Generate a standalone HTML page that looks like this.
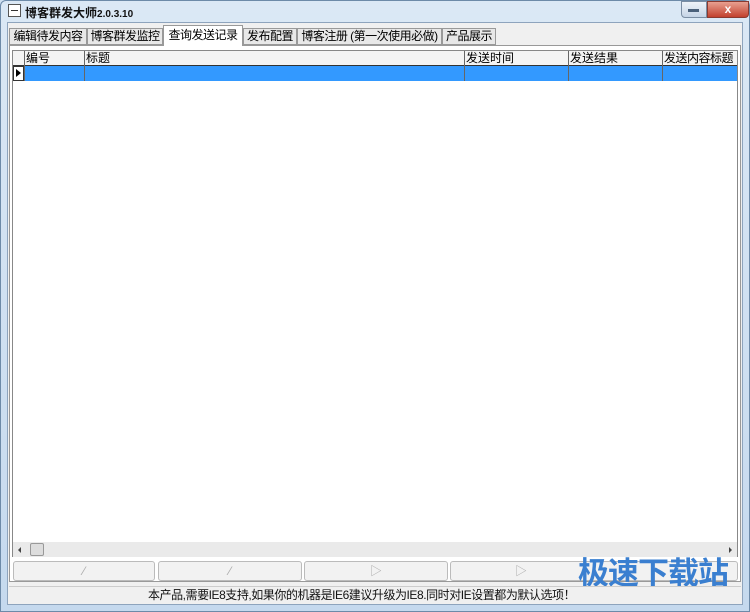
<html><head><style>
*{margin:0;padding:0;box-sizing:border-box}
body{width:750px;height:612px;position:relative;overflow:hidden;font-family:"Liberation Sans","Noto Sans CJK SC",sans-serif;font-size:12px;background:#cfe0f1}
.a{position:absolute}
.t{position:absolute;top:28px;height:17px;border:1px solid #999;background:#e8e8e8;text-align:center;line-height:15px;font-size:12px;letter-spacing:-0.5px;white-space:nowrap;overflow:hidden}
</style></head><body>
<div class="a" style="left:0;top:0;width:750px;height:612px;background:linear-gradient(#dbe8f5,#c5d9ee);border:1px solid #6d8aa8;border-radius:6px 6px 0 0"></div>
<div class="a" style="left:8px;top:4px;width:13px;height:13px;border:1px solid #555;background:#fff"></div>
<div class="a" style="left:11px;top:10px;width:7px;height:1px;background:#333"></div>
<div class="a" style="left:25px;top:4px;font-weight:bold;font-size:12px;color:#111">博客群发大师<span style="font-size:10px">2.0.3.10</span></div>
<div class="a" style="left:681px;top:1px;width:26px;height:17px;border:1px solid #7a8da3;border-radius:0 0 0 4px;background:linear-gradient(#eef3f9,#c5d4e6)"></div>
<div class="a" style="left:688px;top:9px;width:11px;height:3px;background:#4a607a"></div>
<div class="a" style="left:707px;top:1px;width:42px;height:17px;border:1px solid #8a3a30;border-radius:0 0 4px 0;background:linear-gradient(#e8a090,#c2412e);color:#fff;text-align:center;font-weight:bold;font-size:12px;line-height:15px">x</div>
<div class="a" style="left:7px;top:22px;width:736px;height:583px;background:#f0f0f0;border:1px solid #8ea4bd"></div>
<div class="t" style="left:9px;width:78px">编辑待发内容</div>
<div class="t" style="left:87px;width:76px">博客群发监控</div>
<div class="t" style="left:163px;width:80px;top:25px;height:21px;background:#fff;border-bottom:none;line-height:18px;z-index:2">查询发送记录</div>
<div class="t" style="left:243px;width:54px">发布配置</div>
<div class="t" style="left:297px;width:145px">博客注册 (第一次使用必做)</div>
<div class="t" style="left:442px;width:54px">产品展示</div>
<div class="a" style="left:9px;top:45px;width:732px;height:537px;background:#fff;border:1px solid #999"></div>
<div class="a" style="left:12px;top:50px;width:726px;height:507px;background:#fff;border:1px solid #888"></div>
<div class="a" style="left:13px;top:51px;width:724px;height:15px;background:#f4f4f4;border-bottom:1px solid #333"></div>
<div class="a" style="left:24px;top:66px;width:713px;height:15px;background:#3399ff"></div>
<div class="a" style="left:13px;top:66px;width:11px;height:15px;background:#fff;border:1px solid #333"></div>
<div class="a" style="left:16px;top:69px;width:0;height:0;border-left:5px solid #000;border-top:4px solid transparent;border-bottom:4px solid transparent"></div>
<div class="a" style="left:24px;top:51px;width:1px;height:30px;background:#666"></div>
<div class="a" style="left:84px;top:51px;width:1px;height:30px;background:#666"></div>
<div class="a" style="left:464px;top:51px;width:1px;height:30px;background:#666"></div>
<div class="a" style="left:568px;top:51px;width:1px;height:30px;background:#666"></div>
<div class="a" style="left:662px;top:51px;width:1px;height:30px;background:#666"></div>
<div class="a" style="left:26px;top:51px;line-height:14px">编号</div>
<div class="a" style="left:86px;top:51px;line-height:14px">标题</div>
<div class="a" style="left:466px;top:51px;line-height:14px">发送时间</div>
<div class="a" style="left:570px;top:51px;line-height:14px">发送结果</div>
<div class="a" style="left:664px;top:51px;line-height:14px;letter-spacing:-0.5px">发送内容标题</div>
<div class="a" style="left:13px;top:542px;width:724px;height:15px;background:#eaeaea"></div>
<div class="a" style="left:30px;top:543px;width:14px;height:13px;background:#ddd;border:1px solid #999;border-radius:2px"></div>
<div class="a" style="left:18px;top:547px;border-right:3px solid #444;border-top:3px solid transparent;border-bottom:3px solid transparent"></div>
<div class="a" style="left:729px;top:547px;border-left:3px solid #444;border-top:3px solid transparent;border-bottom:3px solid transparent"></div>
<div class="a" style="left:13px;top:561px;width:142px;height:20px;border:1px solid #bbb;border-radius:3px;background:#f2f2f2;color:#aaa;text-align:center;line-height:18px">⁄</div>
<div class="a" style="left:158px;top:561px;width:144px;height:20px;border:1px solid #bbb;border-radius:3px;background:#f2f2f2;color:#aaa;text-align:center;line-height:18px">⁄</div>
<div class="a" style="left:304px;top:561px;width:144px;height:20px;border:1px solid #bbb;border-radius:3px;background:#f2f2f2;color:#aaa;text-align:center;line-height:18px">▷</div>
<div class="a" style="left:450px;top:561px;width:288px;height:20px;border:1px solid #bbb;border-radius:3px;background:#f2f2f2;color:#aaa;padding-left:64px;line-height:18px">▷</div>
<div class="a" style="left:578px;top:554px;font-size:31px;font-weight:bold;color:#3a7fd0;letter-spacing:-1px;line-height:40px">极速下载站</div>
<div class="a" style="left:9px;top:586px;width:732px;height:18px;background:#f0f0f0;border-top:1px solid #ccc"></div>
<div class="a" style="left:148px;top:587px;font-size:12px;line-height:17px;color:#111;letter-spacing:-0.45px">本产品,需要IE8支持,如果你的机器是IE6建议升级为IE8.同时对IE设置都为默认选项！</div>
</body></html>
